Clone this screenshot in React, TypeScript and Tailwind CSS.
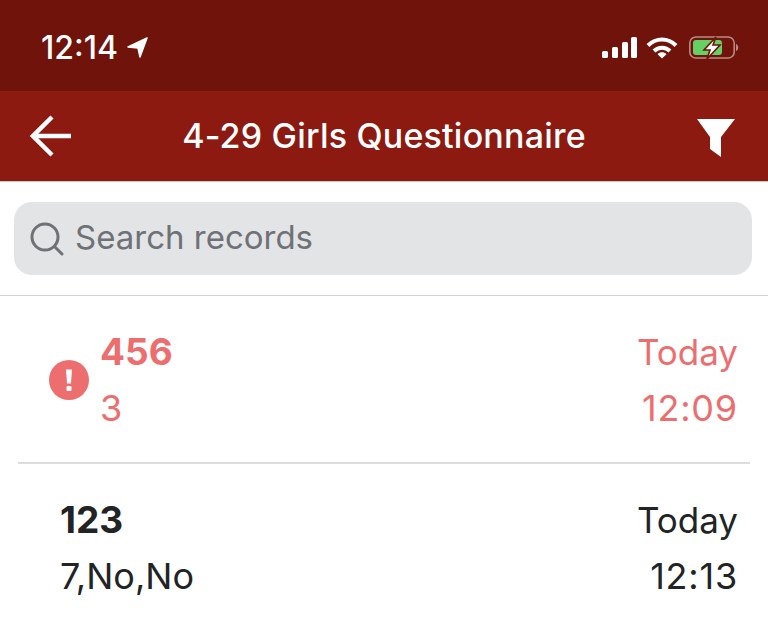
const font = { fontFamily: '"Inter", "Liberation Sans", sans-serif' };

function StatusIcons() {
  return (
    <div className="flex items-center gap-[9px]">
      <svg width="36" height="22" viewBox="0 0 36 22" fill="#fff">
        <rect x="1" y="14" width="6" height="7" rx="1.5" />
        <rect x="11" y="10" width="6" height="11" rx="1.5" />
        <rect x="21" y="5" width="6" height="16" rx="1.5" />
        <rect x="30" y="0" width="6" height="21" rx="1.5" />
      </svg>
      <svg width="32" height="24" viewBox="0 0 32 24" fill="none" stroke="#fff" strokeWidth="4">
        <path d="M2 9.5C10 1.5 22 1.5 30 9.5" />
        <path d="M8 15C12.5 10.5 19.5 10.5 24 15" />
        <path d="M11.5 18.2L16 22.5L20.5 18.2C18 15.7 14 15.7 11.5 18.2Z" fill="#fff" stroke="none" />
      </svg>
      <svg width="50" height="24" viewBox="0 0 50 24" className="ml-[2px]">
        <rect x="0.8" y="1" width="44.4" height="21" rx="6" fill="none" stroke="#b98a85" strokeWidth="1.6" />
        <rect x="4" y="4" width="29" height="15" rx="3" fill="#63d163" />
        <path d="M47 8C50 9 50 14 47 15Z" fill="#b98a85" />
        <path d="M27 1L15 14H21L18 23L31 9H24Z" fill="#fff" stroke="#6f130b" strokeWidth="1.6" />
      </svg>
    </div>
  );
}

function Row({ title, sub, day, time, error }: { title: string; sub: string; day: string; time: string; error?: boolean }) {
  const color = error ? "text-[#ec6e6e]" : "text-[#212325]";
  return (
    <div className={`flex justify-between pr-[30px] ${color}`}>
      <div className="flex items-center">
        {error ? (
          <svg width="40" height="40" viewBox="0 0 40 40" className="ml-[49px] mr-[11px] mt-[-1px]">
            <circle cx="20" cy="20" r="20" fill="#ec6e6e" />
            <path d="M17 9.5h6l-1 14h-4Z" fill="#fff" />
            <rect x="17.5" y="26" width="5" height="5" rx="1" fill="#fff" />
          </svg>
        ) : (
          <div className="w-[60px]" />
        )}
        <div>
          <div className="text-[37px] leading-[56px] font-bold">{title}</div>
          <div className="text-[36px] leading-[56px]">{sub}</div>
        </div>
      </div>
      <div className="text-right leading-[56px]">
        <div className="text-[35px]">{day}</div>
        <div className="text-[36px] tracking-[0.8px]">{time}</div>
      </div>
    </div>
  );
}

export default function App() {
  return (
    <div className="w-[768px] h-[627px] overflow-hidden bg-white" style={font}>
      <div className="h-[91px] bg-[#6f130b] flex items-center justify-between pl-[41px] pr-[29px] pt-[4px] text-white">
        <div className="flex items-center gap-[9px]">
          <span className="text-[32px] font-medium leading-none">12:14</span>
          <svg width="21" height="21" viewBox="0 0 21 21" fill="#fff" stroke="#fff" strokeWidth="1.5" strokeLinejoin="round">
            <path d="M20 1L1 10L11 11L13 20Z" />
          </svg>
        </div>
        <StatusIcons />
      </div>
      <div className="h-[91px] bg-[#8d1a10] flex items-center justify-between pl-[30px] pr-[32px] border-b border-[#c9c9c9] text-white">
        <svg width="42" height="42" viewBox="0 0 42 42" fill="none" stroke="#fff" strokeWidth="4.5">
          <path d="M41 21H3" />
          <path d="M22 2L3 21L22 40" />
        </svg>
        <span className="text-[34px] tracking-[0.2px] font-medium leading-none">4-29 Girls Questionnaire</span>
        <svg width="40" height="40" viewBox="0 0 40 40" fill="#fff" className="mt-[3px]">
          <path d="M1 1H39L25 19V39L14 31V19Z" />
        </svg>
      </div>
      <div className="h-[114px] border-b border-[#d4d4d6] pt-[20px] pl-[14px] pr-[16px]">
        <div className="h-[73px] rounded-[18px] bg-[#e3e4e6] flex items-center pl-[16px] gap-[11px] text-[#6e7276]">
          <svg width="34" height="34" viewBox="0 0 34 34" fill="none" stroke="#6e7276" strokeWidth="3">
            <circle cx="15" cy="15" r="13" />
            <path d="M24.5 24.5L32 32" strokeLinecap="round" />
          </svg>
          <span className="text-[33px] leading-none mt-[-2px]">Search records</span>
        </div>
      </div>
      <div className="pt-[28px] pb-[26px]">
        <Row title="456" sub="3" day="Today" time="12:09" error />
      </div>
      <div className="mx-[18px] h-[2px] bg-[#dcdcde]" />
      <div className="pt-[28px]">
        <Row title="123" sub="7,No,No" day="Today" time="12:13" />
      </div>
    </div>
  );
}
